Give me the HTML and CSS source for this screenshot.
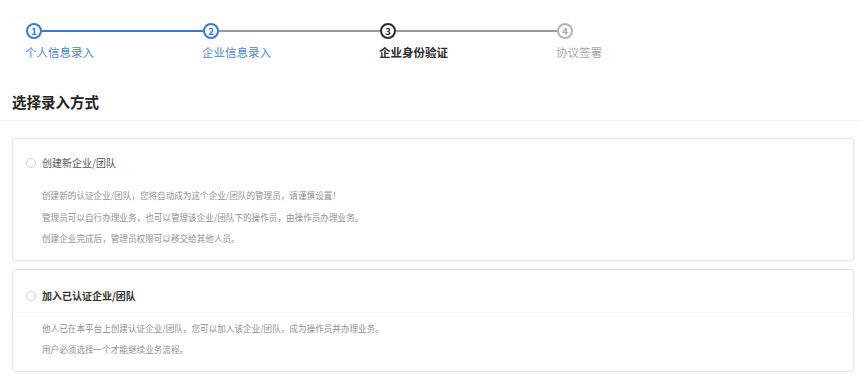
FILE: index.html
```html
<!DOCTYPE html>
<html lang="zh-CN">
<head>
    <meta charset="UTF-8">
    <meta name="viewport" content="width=device-width, initial-scale=1.0">
    <title>企业身份验证</title>
    <link rel="stylesheet" href="styles.css">
</head>
<body>
    <div class="steps">
        <div class="step done">
            <div class="step-head"><span class="step-num">1</span><span class="step-line"></span></div>
            <div class="step-label">个人信息录入</div>
        </div>
        <div class="step done">
            <div class="step-head"><span class="step-num">2</span><span class="step-line"></span></div>
            <div class="step-label">企业信息录入</div>
        </div>
        <div class="step current">
            <div class="step-head"><span class="step-num">3</span><span class="step-line"></span></div>
            <div class="step-label">企业身份验证</div>
        </div>
        <div class="step todo">
            <div class="step-head"><span class="step-num">4</span></div>
            <div class="step-label">协议签署</div>
        </div>
    </div>

    <div class="section-title">选择录入方式</div>

    <div class="options">
        <div class="option">
            <div class="option-head">
                <span class="radio"></span>
                <span class="option-name">创建新企业/团队</span>
            </div>
            <div class="option-desc">
                <p>创建新的认证企业/团队，您将自动成为这个企业/团队的管理员，请谨慎设置！</p>
                <p>管理员可以自行办理业务，也可以管理该企业/团队下的操作员，由操作员办理业务。</p>
                <p>创建企业完成后，管理员权限可以移交给其他人员。</p>
            </div>
        </div>
        <div class="option option-hover">
            <div class="option-head">
                <span class="radio"></span>
                <span class="option-name">加入已认证企业/团队</span>
            </div>
            <div class="option-desc">
                <p>他人已在本平台上创建认证企业/团队，您可以加入该企业/团队，成为操作员并办理业务。</p>
                <p>用户必须选择一个才能继续业务流程。</p>
            </div>
        </div>
    </div>
</body>
</html>
```

FILE: styles.css
```css
body {
    font-family: "Noto Sans CJK SC", "Noto Sans", sans-serif;
    margin: 0;
    background-color: #fff;
    color: #333;
}
.steps {
    display: flex;
    padding: 23px 0 0 26px;
}
.step {
    width: 177px;
}
.step-head {
    display: flex;
    align-items: center;
    height: 16px;
}
.step-num {
    box-sizing: border-box;
    width: 16px;
    height: 16px;
    border: 2px solid #3a78d4;
    border-radius: 50%;
    font-size: 9.5px;
    font-weight: bold;
    line-height: 12px;
    text-align: center;
    color: #3a78d4;
    flex-shrink: 0;
}
.step-line {
    flex: 1;
    height: 2px;
    background-color: #9a9a9a;
}
.step-label {
    margin-top: 5px;
    font-size: 11.5px;
    line-height: 16px;
    margin-left: -1px;
}
.done .step-line {
    background-color: #3a78d4;
}
.step.done:nth-child(2) .step-line {
    background-color: #9a9a9a;
}
.done .step-label {
    color: #4a85c9;
}
.current .step-num {
    border-color: #2b2b2b;
    color: #2b2b2b;
}
.current .step-label {
    font-weight: bold;
    color: #2b2b2b;
}
.todo .step-num {
    border-color: #b4b4b4;
    color: #a8a8a8;
}
.todo .step-label {
    color: #a8a8a8;
}
.section-title {
    margin-top: 32px;
    padding: 0 12px 8px;
    font-size: 14.5px;
    line-height: 20px;
    font-weight: bold;
    color: #222;
    border-bottom: 1px solid #f2f2f2;
}
.options {
    margin: 17px 8px 0 12px;
}
.option {
    border: 1px solid #e4e4e4;
    border-radius: 3px;
    box-shadow: 0 0 2px rgba(0, 0, 0, 0.05);
    margin-bottom: 8px;
}
.option-head {
    display: flex;
    align-items: center;
    padding: 16px 13px 14px;
}
.radio {
    box-sizing: border-box;
    width: 10px;
    height: 10px;
    border: 1px solid #cfcfcf;
    border-radius: 50%;
    margin-right: 6px;
}
.option-name {
    font-size: 10px;
    line-height: 16px;
    color: #555;
}
.option-desc {
    padding: 0 13px 10px 29px;
}
.option-desc p {
    margin: 0;
    font-size: 8.6px;
    line-height: 21.5px;
    color: #8f8f8f;
}
.option-hover .option-head {
    padding: 18px 13px 8px;
    border-bottom: 1px solid #f8f8f8;
}
.option-hover .option-name {
    font-weight: bold;
    color: #333;
}
.option-hover .option-desc {
    padding-top: 5px;
}
```
